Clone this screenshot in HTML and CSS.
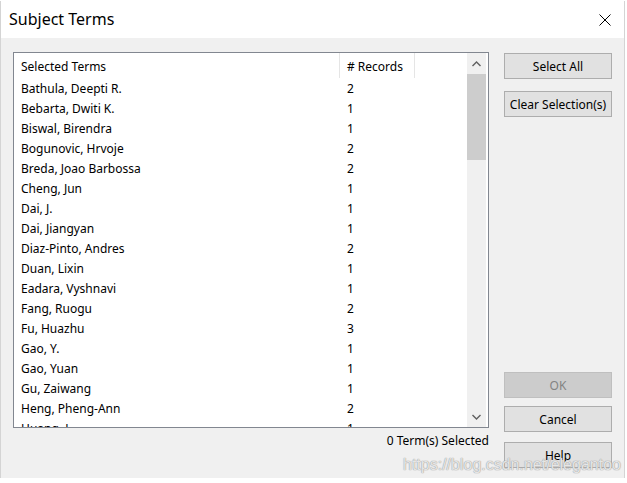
FILE: index.html
```html
<!DOCTYPE html>
<html lang="en">
<head>
  <meta charset="UTF-8">
  <title>Subject Terms</title>
  <link rel="stylesheet" href="styles.css">
</head>
<body>

  <div class="window">
    <div class="titlebar">
      <span class="title">Subject Terms</span>
      <svg class="close" width="12" height="12" viewBox="0 0 12 12">
        <path d="M0.5 0.5 L11.5 11.5 M11.5 0.5 L0.5 11.5" stroke="#000" stroke-width="1" fill="none" />
      </svg>
    </div>

    <div class="body">
      <div class="left">
        <div class="listbox">
          <div class="grid">
            <div class="row head">
              <span class="cell name">Selected Terms</span>
              <span class="cell count">&#35; Records</span>
            </div>
            <div id="rows"></div>
          </div>
          <div class="scrollbar">
            <div class="arrow">
              <svg width="9" height="6" viewBox="0 0 9 6"><path d="M0.5 5 L4.5 1 L8.5 5" stroke="#606060" stroke-width="1.4" fill="none" /></svg>
            </div>
            <div class="thumb"></div>
            <div class="track"></div>
            <div class="arrow">
              <svg width="9" height="6" viewBox="0 0 9 6"><path d="M0.5 1 L4.5 5 L8.5 1" stroke="#606060" stroke-width="1.4" fill="none" /></svg>
            </div>
          </div>
        </div>
        <div class="status">0 Term(s) Selected</div>
      </div>

      <div class="buttons">
        <button class="btn">Select All</button>
        <button class="btn clear">Clear Selection(s)</button>
        <button class="btn ok" disabled>OK</button>
        <button class="btn cancel">Cancel</button>
        <button class="btn help">Help</button>
      </div>
    </div>

    <div class="watermark">https://blog.csdn.net/elegantoo</div>
  </div>

  <script>
    const terms = [
      ['Bathula, Deepti R.', 2],
      ['Bebarta, Dwiti K.', 1],
      ['Biswal, Birendra', 1],
      ['Bogunovic, Hrvoje', 2],
      ['Breda, Joao Barbossa', 2],
      ['Cheng, Jun', 1],
      ['Dai, J.', 1],
      ['Dai, Jiangyan', 1],
      ['Diaz-Pinto, Andres', 2],
      ['Duan, Lixin', 1],
      ['Eadara, Vyshnavi', 1],
      ['Fang, Ruogu', 2],
      ['Fu, Huazhu', 3],
      ['Gao, Y.', 1],
      ['Gao, Yuan', 1],
      ['Gu, Zaiwang', 1],
      ['Heng, Pheng-Ann', 2],
      ['Huang, J.', 1]
    ];

    const rows = document.getElementById('rows');
    terms.forEach(([name, count]) => {
      const row = document.createElement('div');
      row.className = 'row';
      row.innerHTML = `<span class="cell name">${name}</span><span class="cell count">${count}</span>`;
      rows.appendChild(row);
    });
  </script>

</body>
</html>
```

FILE: styles.css
```css
body {
  margin: 0;
  background: #fff;
  font-family: "Noto Sans", "Open Sans", sans-serif;
  font-size: 12px;
  color: #000;
}
.window {
  position: relative;
  width: 625px;
  height: 477px;
  margin-top: 1px;
  background: #f0f0f0;
  border-left: 1px solid #d4d4d4;
  border-right: 1px solid #d4d4d4;
  box-sizing: border-box;
  display: flex;
  flex-direction: column;
}
.titlebar {
  height: 37px;
  background: #fff;
  display: flex;
  align-items: center;
  justify-content: space-between;
  padding: 0 13px 0 8px;
  flex-shrink: 0;
}
.title {
  font-size: 16px;
  margin-top: -1px;
}
.close {
  margin-top: 1px;
}
.body {
  flex: 1;
  display: flex;
  padding: 14px 12px 0 12px;
  gap: 15px;
}
.left {
  display: flex;
  flex-direction: column;
}
.listbox {
  width: 476px;
  height: 376px;
  box-sizing: border-box;
  border: 1px solid #828790;
  background: #fff;
  display: flex;
  overflow: hidden;
}
.grid {
  flex: 1;
  overflow: hidden;
}
.row {
  display: flex;
  height: 20px;
  box-sizing: border-box;
  padding-top: 2px;
  line-height: 18px;
  white-space: nowrap;
}
.row.head {
  height: 25px;
  line-height: 23px;
}
.cell {
  box-sizing: border-box;
  padding-left: 7px;
}
.cell.name {
  width: 326px;
}
.cell.count {
  width: 75px;
}
.head .cell {
  border-right: 1px solid #e5e5e5;
  margin-top: -2px;
  padding-top: 2px;
}
.scrollbar {
  width: 19px;
  margin-right: 2px;
  display: flex;
  flex-direction: column;
  background: #f0f0f0;
}
.arrow {
  height: 21px;
  display: flex;
  align-items: center;
  justify-content: center;
}
.thumb {
  height: 86px;
  background: #cdcdcd;
}
.track {
  flex: 1;
}
.status {
  text-align: right;
  height: 24px;
  padding-top: 2px;
  line-height: 22px;
}
.buttons {
  display: flex;
  flex-direction: column;
  width: 108px;
  padding-top: 1px;
}
.btn {
  height: 26px;
  padding: 0;
  font: inherit;
  color: #000;
  background: #e1e1e1;
  border: 1px solid #adadad;
}
.btn.clear {
  margin-top: 12px;
}
.btn.ok {
  margin-top: auto;
  background: #cccccc;
  border-color: #bfbfbf;
  color: #838383;
}
.btn.cancel {
  margin-top: 8px;
}
.btn.help {
  margin-top: 10px;
  margin-bottom: 10px;
}
/* watermark over the bottom right corner */
.watermark {
  position: absolute;
  left: 402px;
  top: 455px;
  font-family: "Liberation Sans", sans-serif;
  font-size: 16px;
  color: rgba(255, 255, 255, 0.75);
  text-shadow: 0 0 1px #999, 0 0 1px #999;
  pointer-events: none;
}
```
